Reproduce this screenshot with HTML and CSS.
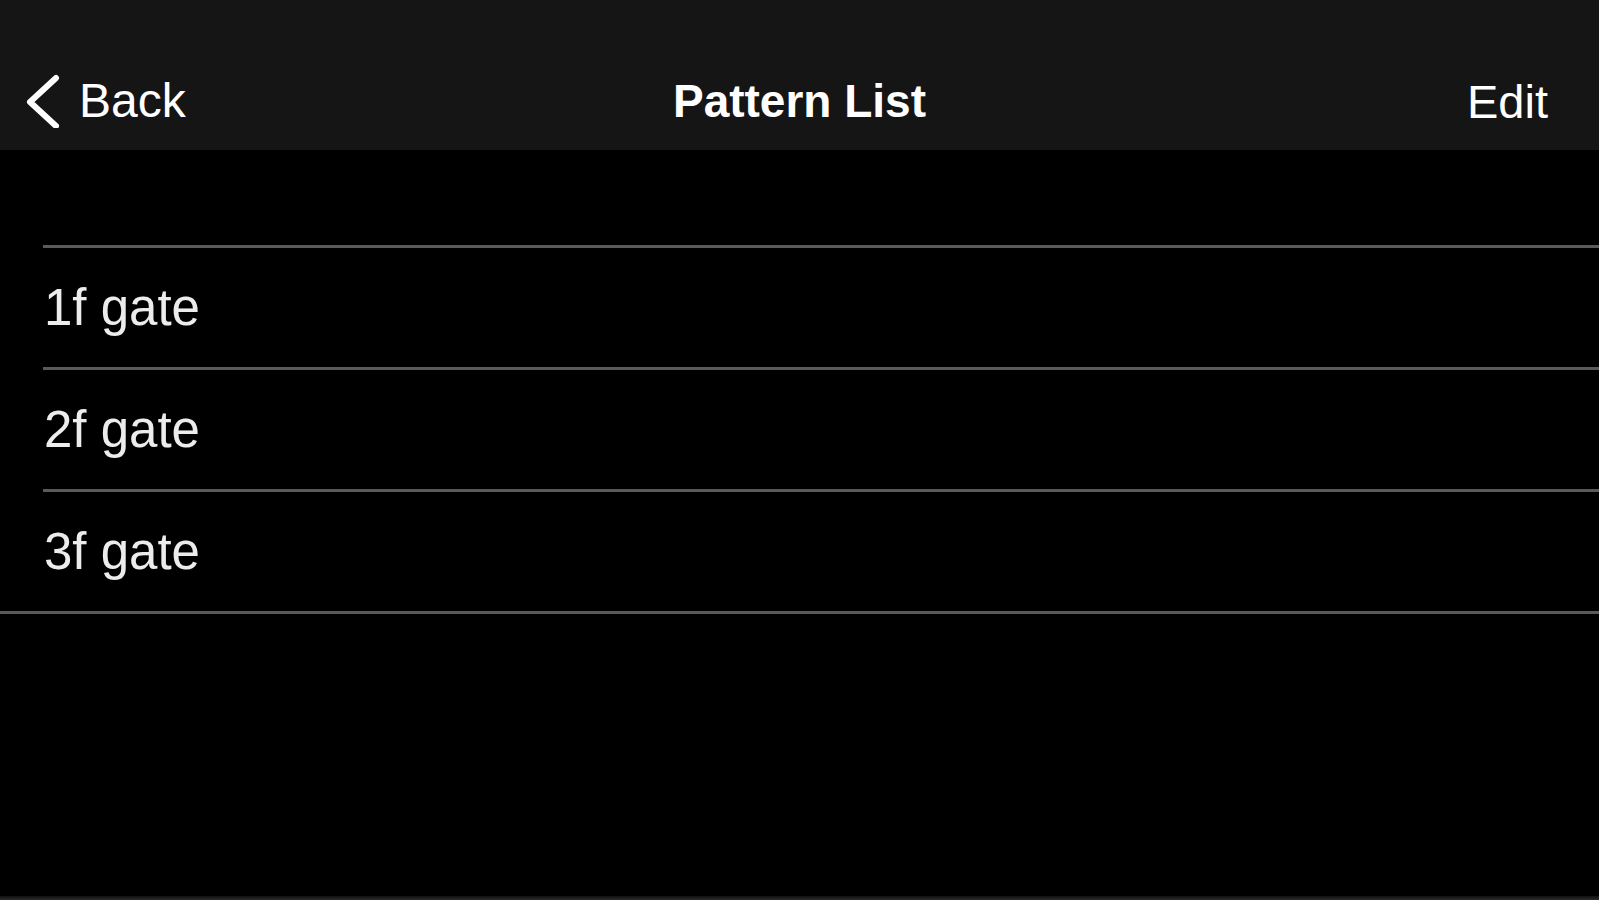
FILE: index.html
```html
<!DOCTYPE html>
<html lang="en">
<head>
<meta charset="utf-8">
<title>Pattern List</title>
<link rel="stylesheet" href="styles.css">
</head>
<body>
<div class="app">
  <header class="navbar">
    <a class="nav-back" href="#">
      <svg class="chevron" width="40" height="60" viewBox="0 0 40 60" aria-hidden="true">
        <path d="M33 10 L7 34 L33 58" fill="none" stroke="#ffffff" stroke-width="6" stroke-linecap="round" stroke-linejoin="round"/>
      </svg>
      <span>Back</span>
    </a>
    <h1 class="nav-title">Pattern List</h1>
    <a class="nav-edit" href="#">Edit</a>
  </header>
  <main class="content">
    <ul class="list">
      <li class="row">1f gate</li>
      <li class="row">2f gate</li>
      <li class="row">3f gate</li>
    </ul>
  </main>
  <div class="bottom-edge"></div>
</div>
</body>
</html>
```
FILE: styles.css
```css
html, body {
  margin: 0;
  padding: 0;
  background: #000;
  height: 100%;
  overflow: hidden;
}

.app {
  height: 900px;
  display: flex;
  flex-direction: column;
  font-family: "Liberation Sans", Arial, Helvetica, sans-serif;
}

.navbar {
  height: 150px;
  box-sizing: border-box;
  padding: 52px 0 0 0;
  background: #151515;
  display: grid;
  grid-template-columns: 1fr auto 1fr;
  align-items: center;
}

.nav-back {
  justify-self: start;
  display: flex;
  align-items: center;
  gap: 16px;
  padding-left: 23px;
  color: #ffffff;
  text-decoration: none;
  font-size: 48px;
  line-height: 1;
}

.chevron {
  display: block;
  margin-top: -6px;
}

.nav-title {
  margin: 0;
  color: #ffffff;
  font-size: 46px;
  font-weight: bold;
  line-height: 1;
}

.nav-edit {
  justify-self: end;
  padding-right: 51px;
  color: #ffffff;
  text-decoration: none;
  font-size: 47px;
  line-height: 1;
}

.content {
  flex: 1;
  padding-top: 95px;
  background: #000;
}

.list {
  list-style: none;
  margin: 0;
  padding: 0;
  border-bottom: 3px solid #5a5a5a;
}

.row {
  margin-left: 43px;
  height: 119px;
  border-top: 3px solid #5a5a5a;
  display: flex;
  align-items: center;
  padding-left: 1px;
  color: #ececec;
  font-size: 51px;
  line-height: 1;
}

.bottom-edge {
  height: 4px;
  background: linear-gradient(#101010, #2a2a2a);
}
```
